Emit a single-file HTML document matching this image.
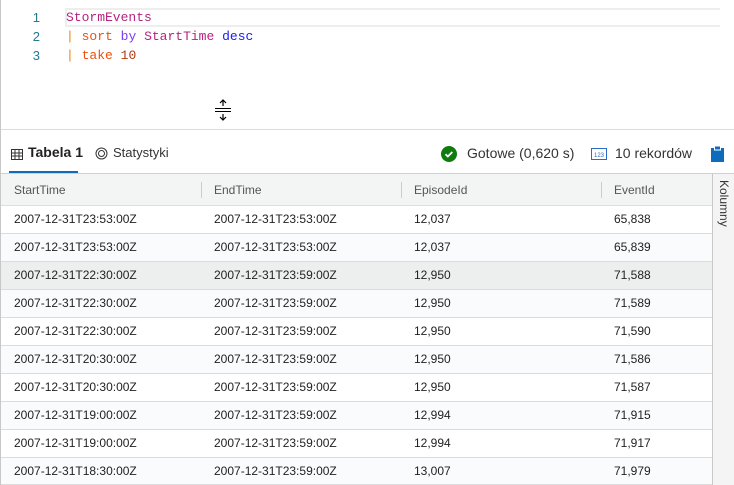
<!DOCTYPE html>
<html><head><meta charset="utf-8"><style>
*{margin:0;padding:0;box-sizing:border-box}
body{width:734px;height:485px;overflow:hidden;background:#fff;font-family:"Segoe UI","Liberation Sans",sans-serif;position:relative;color:#222}
.frame{position:absolute;left:0;top:0;width:734px;height:485px;border:1px solid #c8c8c8;border-top:none;border-right:none}
.code{position:absolute;font-family:"Liberation Mono",monospace;font-size:13px;line-height:19px}
.ln{position:absolute;left:28px;width:12px;text-align:right;color:#237893;font-family:"Liberation Sans",sans-serif;font-size:13px;line-height:19px}
.cur{position:absolute;left:65px;top:8px;width:655px;height:19px;border:2px solid #eeeeee;border-right:none}
.tabs{position:absolute;left:1px;top:129px;width:733px;height:45px;border-top:1px solid #ddd;border-bottom:1px solid #d0d0d0;font-size:14px}
.hdr{position:absolute;left:1px;top:174px;width:711px;height:32px;background:#f3f4f4;border-bottom:1px solid #ddd;font-size:12px;color:#555}
.row{position:absolute;left:1px;width:711px;height:28px;border-bottom:1px solid #dcdcdc;font-size:12px;color:#222}
.c{position:absolute;top:0;line-height:27px}
.sep{position:absolute;top:8px;width:1px;height:16px;background:#ccc}
.side{position:absolute;left:712px;top:174px;width:22px;height:311px;background:#f4f4f4;border-left:1px solid #c8c8c8}
</style></head><body>
<div class="frame"></div>
<div class="cur"></div>
<div class="ln" style="top:8px">1</div>
<div class="ln" style="top:27px">2</div>
<div class="ln" style="top:46px">3</div>
<div class="code" style="left:66px;top:8px"><span style="color:#b5237f">StormEvents</span></div>
<div class="code" style="left:66px;top:27px"><span style="color:#e8890c">|</span> <span style="color:#f0500a">sort</span> <span style="color:#7a3cf0">by</span> <span style="color:#b5237f">StartTime</span> <span style="color:#1a1aff">desc</span></div>
<div class="code" style="left:66px;top:46px"><span style="color:#e8890c">|</span> <span style="color:#f0500a">take</span> <span style="color:#b03a12">10</span></div>
<svg style="position:absolute;left:213px;top:99px" width="20" height="22"><path d="M10 1v6M7 4l3-3 3 3M10 21v-6M7 18l3 3 3-3" stroke="#000" fill="none" stroke-width="1.2"/><path d="M2 9.5h16M2 12.5h16" stroke="#000" stroke-width="1"/></svg>
<div class="tabs">
<svg style="position:absolute;left:10px;top:19px" width="12" height="11"><rect x=".5" y=".5" width="11" height="10" fill="none" stroke="#333"/><path d="M.5 4h11M.5 7h11M4 .5v10M8 .5v10" stroke="#333"/></svg>
<span style="position:absolute;left:27px;top:14px;font-weight:600">Tabela 1</span>
<div style="position:absolute;left:8px;top:41px;width:69px;height:2px;background:#0f6cbd"></div>
<svg style="position:absolute;left:94px;top:17px" width="13" height="13"><circle cx="6.5" cy="6.5" r="5.5" fill="none" stroke="#333"/><circle cx="6.5" cy="6.5" r="3" fill="none" stroke="#333"/></svg>
<span style="position:absolute;left:112px;top:15px;font-size:13px;color:#333">Statystyki</span>
<svg style="position:absolute;left:440px;top:16px" width="16" height="16"><circle cx="8" cy="8" r="8" fill="#107c10"/><path d="M4.5 8.2l2.3 2.3 4.5-4.5" stroke="#fff" stroke-width="1.8" fill="none"/></svg>
<span style="position:absolute;left:466px;top:15px;color:#333">Gotowe (0,620 s)</span>
<svg style="position:absolute;left:590px;top:18px" width="16" height="12"><rect x=".5" y=".5" width="15" height="11" fill="#fff" stroke="#2b6cc4"/><text x="8" y="9" font-size="6" text-anchor="middle" fill="#2b6cc4" font-family="Liberation Sans">123</text></svg>
<span style="position:absolute;left:614px;top:15px;color:#333">10 rekordów</span>
<svg style="position:absolute;left:710px;top:16px" width="13" height="16"><rect x="0" y="2" width="13" height="14" fill="#0f6cbd"/><rect x="3.5" y="0" width="6" height="4" fill="#0f6cbd" stroke="#fff" stroke-width="1"/></svg>
</div>
<div class="hdr">
<span class="c" style="left:13px;line-height:32px">StartTime</span>
<div class="sep" style="left:200px"></div><span class="c" style="left:213px;line-height:32px">EndTime</span>
<div class="sep" style="left:400px"></div><span class="c" style="left:413px;line-height:32px">EpisodeId</span>
<div class="sep" style="left:600px"></div><span class="c" style="left:613px;line-height:32px">EventId</span>
</div>
<div class="side"><span style="position:absolute;left:4px;top:6px;writing-mode:vertical-rl;font-size:12px;color:#333">Kolumny</span></div>
<div class="row" style="top:206px;background:#fff"><span class="c" style="left:13px">2007-12-31T23:53:00Z</span><span class="c" style="left:213px">2007-12-31T23:53:00Z</span><span class="c" style="left:413px">12,037</span><span class="c" style="left:613px">65,838</span></div>
<div class="row" style="top:234px;background:#fafbfd"><span class="c" style="left:13px">2007-12-31T23:53:00Z</span><span class="c" style="left:213px">2007-12-31T23:53:00Z</span><span class="c" style="left:413px">12,037</span><span class="c" style="left:613px">65,839</span></div>
<div class="row" style="top:262px;background:#edeeee"><span class="c" style="left:13px">2007-12-31T22:30:00Z</span><span class="c" style="left:213px">2007-12-31T23:59:00Z</span><span class="c" style="left:413px">12,950</span><span class="c" style="left:613px">71,588</span></div>
<div class="row" style="top:290px;background:#fafbfd"><span class="c" style="left:13px">2007-12-31T22:30:00Z</span><span class="c" style="left:213px">2007-12-31T23:59:00Z</span><span class="c" style="left:413px">12,950</span><span class="c" style="left:613px">71,589</span></div>
<div class="row" style="top:318px;background:#fff"><span class="c" style="left:13px">2007-12-31T22:30:00Z</span><span class="c" style="left:213px">2007-12-31T23:59:00Z</span><span class="c" style="left:413px">12,950</span><span class="c" style="left:613px">71,590</span></div>
<div class="row" style="top:346px;background:#fafbfd"><span class="c" style="left:13px">2007-12-31T20:30:00Z</span><span class="c" style="left:213px">2007-12-31T23:59:00Z</span><span class="c" style="left:413px">12,950</span><span class="c" style="left:613px">71,586</span></div>
<div class="row" style="top:374px;background:#fff"><span class="c" style="left:13px">2007-12-31T20:30:00Z</span><span class="c" style="left:213px">2007-12-31T23:59:00Z</span><span class="c" style="left:413px">12,950</span><span class="c" style="left:613px">71,587</span></div>
<div class="row" style="top:402px;background:#fafbfd"><span class="c" style="left:13px">2007-12-31T19:00:00Z</span><span class="c" style="left:213px">2007-12-31T23:59:00Z</span><span class="c" style="left:413px">12,994</span><span class="c" style="left:613px">71,915</span></div>
<div class="row" style="top:430px;background:#fff"><span class="c" style="left:13px">2007-12-31T19:00:00Z</span><span class="c" style="left:213px">2007-12-31T23:59:00Z</span><span class="c" style="left:413px">12,994</span><span class="c" style="left:613px">71,917</span></div>
<div class="row" style="top:458px;background:#fafbfd;height:27px"><span class="c" style="left:13px">2007-12-31T18:30:00Z</span><span class="c" style="left:213px">2007-12-31T23:59:00Z</span><span class="c" style="left:413px">13,007</span><span class="c" style="left:613px">71,979</span></div>
</body></html>
